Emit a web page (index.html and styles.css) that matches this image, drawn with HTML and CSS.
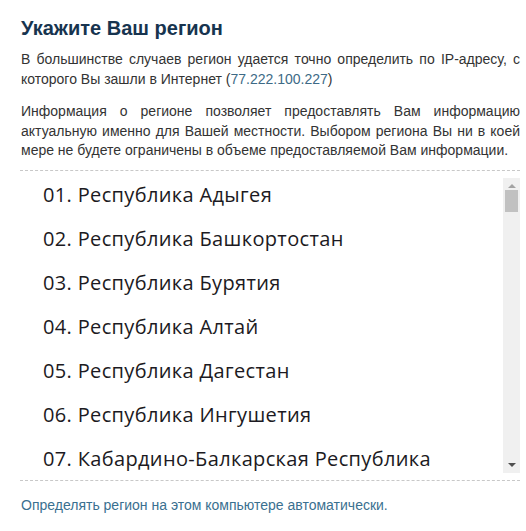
FILE: index.html
```html
<!DOCTYPE html>
<html lang="ru">
<head>
<meta charset="utf-8">
<title>Укажите Ваш регион</title>
<link rel="stylesheet" href="styles.css">
</head>
<body>
<div class="region">
  <h1 class="region-title">Укажите Ваш регион</h1>
  <p class="region-text">В большинстве случаев регион удается точно определить по IP-адресу, с которого Вы зашли в Интернет (<span class="ip">77.222.100.227</span>)</p>
  <p class="region-text">Информация о регионе позволяет предоставлять Вам информацию актуальную именно для Вашей местности. Выбором региона Вы ни в коей мере не будете ограничены в объеме предоставляемой Вам информации.</p>
  <div class="region-box">
    <ul class="region-list">
      <li>01. Республика Адыгея</li>
      <li>02. Республика Башкортостан</li>
      <li>03. Республика Бурятия</li>
      <li>04. Республика Алтай</li>
      <li>05. Республика Дагестан</li>
      <li>06. Республика Ингушетия</li>
      <li>07. Кабардино-Балкарская Республика</li>
    </ul>
    <div class="scrollbar">
      <span class="arrow arrow-up"></span>
      <span class="thumb"></span>
      <span class="track"></span>
      <span class="arrow arrow-down"></span>
    </div>
  </div>
  <a class="auto-link" href="#">Определять регион на этом компьютере автоматически.</a>
</div>
</body>
</html>
```
FILE: styles.css
```css
html, body {
  margin: 0;
  padding: 0;
  background: #ffffff;
}
body {
  font-family: "Liberation Sans", Arial, sans-serif;
  color: #333333;
}
.region {
  padding: 15px 6px 0 21px;
  width: 499px;
}
.region-title {
  margin: 0;
  font-size: 20px;
  line-height: 26px;
  font-weight: bold;
  color: #17344f;
}
.region-text {
  margin: 9px 0 0 0;
  font-size: 14px;
  line-height: 19.5px;
  text-align: justify;
  color: #333333;
}
.region-text + .region-text {
  margin-top: 13px;
}
.ip {
  color: #3d6a86;
}
.region-box {
  margin: 9px 0 0 -1px;
  border-top: 1px dashed #c8c8c8;
  border-bottom: 1px dashed #c8c8c8;
  display: flex;
  height: 311px;
  box-sizing: border-box;
  padding-top: 2px;
}
.region-list {
  list-style: none;
  margin: 0;
  padding: 0 0 0 23px;
  flex: 1;
  font-family: "Open Sans", "Noto Sans", sans-serif;
  font-size: 20px;
  letter-spacing: 0.35px;
  color: #1c1a22;
}
.region-list li {
  height: 44px;
  line-height: 44px;
  white-space: nowrap;
}
.scrollbar {
  width: 17px;
  margin: 5px 0 7px 0;
  background: #f0f0f0;
  display: flex;
  flex-direction: column;
  align-items: center;
}
.arrow {
  width: 0;
  height: 0;
  border-left: 4px solid transparent;
  border-right: 4px solid transparent;
}
.arrow-up {
  margin-top: 6px;
  border-bottom: 4px solid #a3a3a3;
}
.arrow-down {
  margin-bottom: 6px;
  border-top: 4px solid #505050;
}
.thumb {
  margin-top: 2px;
  width: 13px;
  height: 22px;
  background: #c1c1c1;
}
.track {
  flex: 1;
}
.auto-link {
  display: block;
  margin-top: 15px;
  font-size: 14px;
  line-height: 19.5px;
  color: #3a7090;
  text-decoration: none;
}
```
